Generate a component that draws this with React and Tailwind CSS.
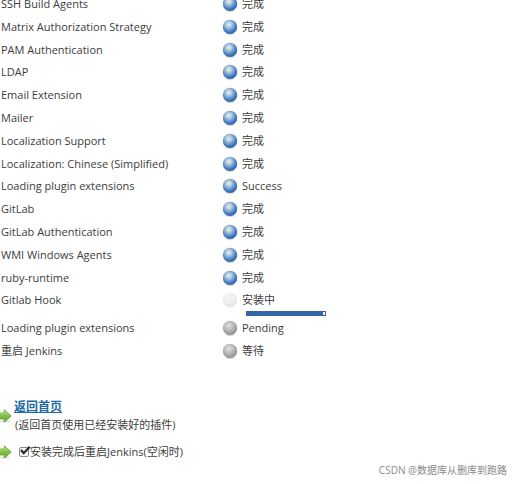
import React from "react";

const plugins = [
  ["SSH Build Agents", "完成", "blue"],
  ["Matrix Authorization Strategy", "完成", "blue"],
  ["PAM Authentication", "完成", "blue"],
  ["LDAP", "完成", "blue"],
  ["Email Extension", "完成", "blue"],
  ["Mailer", "完成", "blue"],
  ["Localization Support", "完成", "blue"],
  ["Localization: Chinese (Simplified)", "完成", "blue"],
  ["Loading plugin extensions", "Success", "blue"],
  ["GitLab", "完成", "blue"],
  ["GitLab Authentication", "完成", "blue"],
  ["WMI Windows Agents", "完成", "blue"],
  ["ruby-runtime", "完成", "blue"],
  ["Gitlab Hook", "安装中", "faded"],
  ["Loading plugin extensions", "Pending", "grey"],
  ["重启 Jenkins", "等待", "grey"],
];

function Gradients() {
  return (
    <svg className="absolute size-0" aria-hidden="true">
      <defs>
        <radialGradient id="blue" cx="0.42" cy="0.34" r="0.68">
          <stop offset="0" stopColor="#e9eedc" />
          <stop offset="0.25" stopColor="#b9d0e0" />
          <stop offset="0.5" stopColor="#78a3d4" />
          <stop offset="0.8" stopColor="#3a72ba" />
          <stop offset="1" stopColor="#2a5ea8" />
        </radialGradient>
        <radialGradient id="grey" cx="0.42" cy="0.34" r="0.66">
          <stop offset="0" stopColor="#e0e0e0" />
          <stop offset="0.4" stopColor="#c2c2c2" />
          <stop offset="1" stopColor="#8e8e8e" />
        </radialGradient>
        <radialGradient id="faded" cx="0.42" cy="0.34" r="0.66">
          <stop offset="0" stopColor="#f5f5f5" />
          <stop offset="0.6" stopColor="#eeeeee" />
          <stop offset="1" stopColor="#e2e2e2" />
        </radialGradient>
        <linearGradient id="arrow" x1="0" y1="0" x2="0" y2="1">
          <stop offset="0" stopColor="#a5d867" />
          <stop offset="0.5" stopColor="#7cc142" />
          <stop offset="1" stopColor="#5fa92c" />
        </linearGradient>
      </defs>
    </svg>
  );
}

function Ball({ color }) {
  return (
    <svg className="size-4 shrink-0" viewBox="0 0 16 16" aria-hidden="true">
      <ellipse cx="8" cy="14.6" rx="4.5" ry="1.3" fill="#000" opacity={color === "faded" ? 0.04 : 0.16} />
      <circle cx="8" cy="7.9" r="7.2" fill={`url(#${color})`} />
    </svg>
  );
}

function Arrow() {
  return (
    <svg className="h-4 w-3 shrink-0" viewBox="0 0 12 16" aria-hidden="true">
      <ellipse cx="5" cy="13.4" rx="5" ry="1.2" fill="#000" opacity="0.12" />
      <path
        d="M-2 5H4.2V1.8L11.2 8L4.2 14.2V11H-2Z"
        fill="url(#arrow)"
        stroke="#69a03c"
        strokeWidth="0.8"
        strokeLinejoin="round"
      />
      <path d="M0 6H5.1V3.9L9 7.5" fill="none" stroke="#b8e08c" strokeWidth="0.7" />
    </svg>
  );
}

export default function App() {
  return (
    <main className="overflow-hidden bg-white font-['Open_Sans','Noto_Sans_CJK_SC',sans-serif] text-[11px] leading-4 text-[#3c3c3c]">
      <Gradients />
      <table className="-mt-[7px] h-[370px] w-full border-collapse">
        <tbody>
          {plugins.map(([name, status, color], i) => (
            <tr key={i} className="h-[22px] align-top">
              <td className="w-[222px] pt-[3px] pl-px">{name}</td>
              <td className="pt-[3px]">
                <div className="flex items-center gap-1">
                  <Ball color={color} />
                  <span>{status}</span>
                </div>
                {color === "faded" && (
                  <div className="mt-[3px] ml-6 flex h-[5px] w-20 justify-end border border-[#3465a4] bg-[#3465a4]" role="progressbar" aria-label={name} aria-valuenow={97}>
                    <span className="w-0.5 bg-white" />
                  </div>
                )}
              </td>
            </tr>
          ))}
        </tbody>
      </table>
      <section className="mt-[35px]">
        <div className="flex items-center gap-0.5">
          <Arrow />
          <div className="leading-[18px]">
            <a href="#top" className="block text-[12px] font-bold text-[#1b6aa5] underline">返回首页</a>
            <p className="pl-px">(返回首页使用已经安装好的插件)</p>
          </div>
        </div>
        <div className="mt-[10px] flex items-center gap-[7px]">
          <Arrow />
          <label className="flex items-center">
            <span className="relative flex h-4 w-[11px] items-center">
              <input type="checkbox" defaultChecked className="peer size-[10px] appearance-none rounded-xs border border-[#8d8d8d] bg-[#f4f4f4]" />
              <svg className="pointer-events-none absolute top-px left-0 hidden h-3 w-3 peer-checked:block" viewBox="0 0 12 12" aria-hidden="true">
                <path d="M2 5L4.7 8.2L10.8 1.8" fill="none" stroke="#252b2e" strokeWidth="2.2" />
              </svg>
            </span>
            安装完成后重启Jenkins(空闲时)
          </label>
        </div>
      </section>
      <footer className="mt-0.5 pr-[15px] text-right text-[10px] text-[#8a8a8a]">CSDN @数据库从删库到跑路</footer>
    </main>
  );
}
